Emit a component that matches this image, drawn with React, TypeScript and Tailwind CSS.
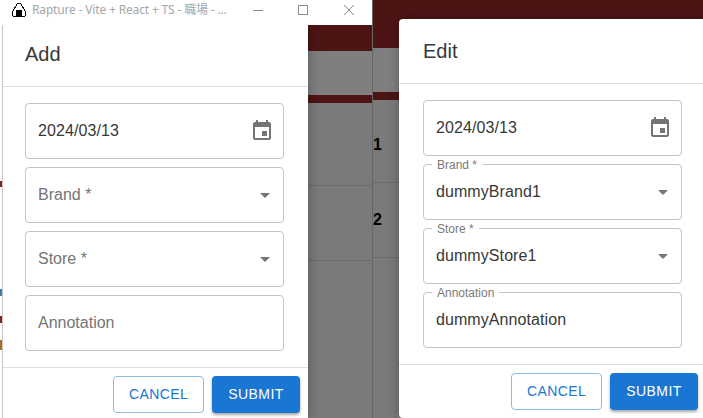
import React from "react";

const font = { fontFamily: '"Liberation Sans", Arial, sans-serif' };

function ArrowDrop() {
  return (
    <svg viewBox="0 0 24 24" className="w-6 h-6 shrink-0 fill-[#757575] -mr-[3px]">
      <path d="M7 10l5 5 5-5z" />
    </svg>
  );
}

function EventIcon() {
  return (
    <svg viewBox="0 0 24 24" className="w-6 h-6 shrink-0 fill-[#757575]">
      <path d="M17 12h-5v5h5v-5zM16 1v2H8V1H6v2H5c-1.11 0-1.99.9-1.99 2L3 19c0 1.1.89 2 2 2h14c1.1 0 2-.9 2-2V5c0-1.1-.9-2-2-2h-1V1h-2zm3 18H5V8h14v11z" />
    </svg>
  );
}

function Field({
  value,
  placeholder,
  label,
  icon,
}: {
  value?: string;
  placeholder?: string;
  label?: string;
  icon?: React.ReactNode;
}) {
  return (
    <div className="relative h-14 w-[259px] rounded border border-[#c4c4c4] flex items-center justify-between pl-[12px] pr-[9px] bg-white">
      {label && (
        <span className="absolute left-[8px] -top-[7px] bg-white px-[5px] text-[12px] leading-[14px] text-[#7a7a7a]">
          {label}
        </span>
      )}
      <span className={value ? "text-[16px] tracking-[0.08px] text-[#383838]" : "text-[16px] text-[#757575]"}>{value ?? placeholder}</span>
      {icon}
    </div>
  );
}

function Dialog({
  title,
  fields,
  className,
  inset,
  actions,
}: {
  title: string;
  fields: React.ReactNode;
  className: string;
  inset: string;
  actions: string;
}) {
  return (
    <div className={"absolute bg-white flex flex-col shadow-[0_0_12px_rgba(0,0,0,0.3)] " + className}>
      <div className={"h-[64px] shrink-0 flex items-center text-[20px] text-[#383838] border-b border-[#e0e0e0] box-content " + inset}>
        {title}
      </div>
      <div className={"flex flex-col gap-2 pt-4 pb-4 border-b border-[#e0e0e0] w-full " + inset}>{fields}</div>
      <div className={"flex gap-2 pt-2 " + actions}>
        <button className="w-[91px] h-[37px] rounded border border-[#8dbbe9] text-[#1976d2] text-[14px] tracking-[0.4px] bg-white">
          CANCEL
        </button>
        <button className="w-[88px] h-[37px] rounded bg-[#1976d2] text-white text-[14px] tracking-[0.4px] shadow-[0_2px_3px_rgba(0,0,0,0.35)]">
          SUBMIT
        </button>
      </div>
    </div>
  );
}

function Backdrop({ top, label }: { top: string; label?: boolean }) {
  return (
    <div className="flex flex-col h-full">
      <div className={"bg-[#4d1414] shrink-0 " + top} />
      <div className="h-[44px] shrink-0 bg-[#7f7f7f]" />
      <div className="h-[8px] shrink-0 bg-[#4d1414]" />
      <div className="h-[83px] shrink-0 bg-[#7a7a7a] border-b border-[#6b6b6b] flex items-center pt-[8px]">
        {label && <span className="text-[16px] font-bold text-black">1</span>}
      </div>
      <div className="h-[75px] shrink-0 bg-[#7a7a7a] border-b border-[#6b6b6b] flex items-center">
        {label && <span className="text-[16px] font-bold text-black">2</span>}
      </div>
      <div className="flex-1 bg-[#7a7a7a]" />
    </div>
  );
}

function Onigiri() {
  return (
    <svg viewBox="0 0 14 14" className="w-[14px] h-[14px]" shapeRendering="crispEdges">
      <path d="M5.5 0.5h3L10.5 3.5 13.5 9v3l-1 1.5h-11l-1-1.5V9L3.500 3.500z" fill="#fff" stroke="#000" strokeWidth="1" />
      <rect x="4" y="7" width="6" height="6" fill="#000" />
    </svg>
  );
}

export default function App() {
  return (
    <div className="w-[703px] h-[418px] overflow-hidden flex bg-white" style={font}>
      <div className="w-[372px] h-full shrink-0 flex flex-col relative overflow-hidden">
        <div className="h-[25px] shrink-0 bg-white flex items-center pl-3 pb-[5px] relative z-10">
          <Onigiri />
          <span
            className="ml-[6px] text-[12px] tracking-[-0.16px] text-[#a3a7ac] whitespace-nowrap"
            style={{ fontFamily: '"Noto Sans", "Noto Sans CJK JP", sans-serif' }}
          >
            Rapture - Vite + React + TS - 職場 - ...
          </span>
          <div className="ml-auto flex items-center pr-[18px]">
            <svg viewBox="0 0 10 10" className="w-[10px] h-[10px] stroke-[#8a8a8a] fill-none">
              <path d="M0 5.500h10" />
            </svg>
            <svg viewBox="0 0 10 10" className="w-[10px] h-[10px] ml-[35px] stroke-[#8a8a8a] fill-none">
              <rect x="0.5" y="0.5" width="9" height="9" />
            </svg>
            <svg viewBox="0 0 10 10" className="w-[10px] h-[10px] ml-[36px] stroke-[#8a8a8a] fill-none">
              <path d="M0 0l10 10M10 0L0 10" />
            </svg>
          </div>
        </div>
        <div className="flex-1 flex min-h-0">
          <div className="w-[308px] shrink-0" />
          <div className="flex-1">
            <Backdrop top="h-[26px]" />
          </div>
        </div>
        <Dialog
          title="Add"
          className="left-[3px] top-[22px] w-[305px] h-[396px]"
          inset="pl-[22px]"
          actions="pl-[110px]"
          fields={
            <>
              <Field value="2024/03/13" icon={<EventIcon />} />
              <Field placeholder="Brand *" icon={<ArrowDrop />} />
              <Field placeholder="Store *" icon={<ArrowDrop />} />
              <Field placeholder="Annotation" />
            </>
          }
        />
        <div className="absolute left-0 top-[25px] w-[3px] h-[393px] bg-white border-r border-[#c4c4c4] z-10" />
        <span className="absolute left-0 top-[181px] w-[2px] h-[6px] bg-[#8a1f1f] z-20" />
        <span className="absolute left-0 top-[289px] w-[2px] h-[7px] bg-[#3f7fa8] z-20" />
        <span className="absolute left-0 top-[316px] w-[2px] h-[7px] bg-[#8a1f1f] z-20" />
        <span className="absolute left-0 top-[340px] w-[2px] h-[10px] bg-[#a8702a] z-20" />
      </div>
      <div className="flex-1 h-full relative border-l border-[#666] overflow-hidden">
        <Backdrop top="h-[48px]" label />
        <Dialog
          title="Edit"
          className="left-[26px] top-[19px] w-[320px] h-[399px] rounded-l-[4px]"
          inset="pl-[24px]"
          actions="pl-[112px]"
          fields={
            <>
              <Field value="2024/03/13" icon={<EventIcon />} />
              <Field value="dummyBrand1" label="Brand *" icon={<ArrowDrop />} />
              <Field value="dummyStore1" label="Store *" icon={<ArrowDrop />} />
              <Field value="dummyAnnotation" label="Annotation" />
            </>
          }
        />
      </div>
    </div>
  );
}
